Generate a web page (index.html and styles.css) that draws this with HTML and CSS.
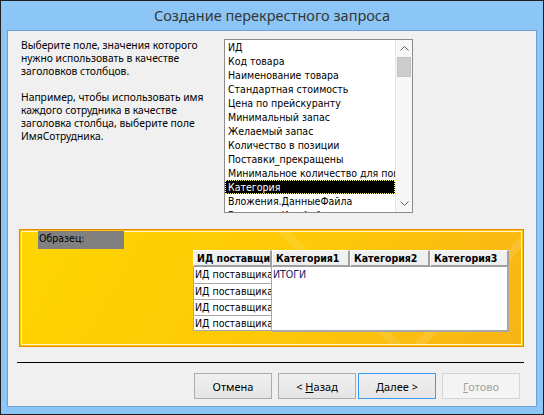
FILE: index.html
```html
<!DOCTYPE html>
<html lang="ru">
<head>
    <meta charset="UTF-8">
    <meta name="viewport" content="width=device-width, initial-scale=1.0">
    <title>Создание перекрестного запроса</title>
    <link rel="stylesheet" href="styles.css">
</head>
<body>

    <div class="window">
        <div class="titlebar">Создание перекрестного запроса</div>

        <div class="client">
            <div class="top">
                <div class="help">
                    <p>Выберите поле, значения которого нужно использовать в качестве заголовков столбцов.</p>
                    <p>Например, чтобы использовать имя каждого сотрудника в качестве заголовка столбца, выберите поле ИмяСотрудника.</p>
                </div>

                <div class="listbox">
                    <ul class="items">
                        <li>ИД</li>
                        <li>Код товара</li>
                        <li>Наименование товара</li>
                        <li>Стандартная стоимость</li>
                        <li>Цена по прейскуранту</li>
                        <li>Минимальный запас</li>
                        <li>Желаемый запас</li>
                        <li>Количество в позиции</li>
                        <li>Поставки_прекращены</li>
                        <li>Минимальное количество для повторного заказа</li>
                        <li class="selected"><span>Категория</span></li>
                        <li>Вложения.ДанныеФайла</li>
                        <li>Вложения.ИмяФайла</li>
                    </ul>
                    <div class="scrollbar">
                        <div class="arrow">
                            <svg width="9" height="5" viewBox="0 0 9 5"><polyline points="0.5,4.5 4.5,0.5 8.5,4.5" fill="none" stroke="#606060" stroke-width="1"/></svg>
                        </div>
                        <div class="thumb"></div>
                        <div class="track"></div>
                        <div class="arrow">
                            <svg width="9" height="5" viewBox="0 0 9 5"><polyline points="0.5,0.5 4.5,4.5 8.5,0.5" fill="none" stroke="#606060" stroke-width="1"/></svg>
                        </div>
                    </div>
                </div>
            </div>

            <div class="sample">
                <div class="sample-label">Образец:</div>
                <div class="grid">
                    <div class="grid-head">
                        <div class="hcell first">ИД поставщика</div>
                        <div class="hcell">Категория1</div>
                        <div class="hcell wide">Категория2</div>
                        <div class="hcell">Категория3</div>
                    </div>
                    <div class="grid-body">
                        <div class="rows">
                            <div class="rcell h17">ИД поставщика1</div>
                            <div class="rcell h16">ИД поставщика2</div>
                            <div class="rcell h16">ИД поставщика3</div>
                            <div class="rcell h15">ИД поставщика4</div>
                        </div>
                        <div class="values">ИТОГИ</div>
                    </div>
                </div>
            </div>

            <div class="separator"></div>

            <div class="buttons">
                <button class="btn">Отмена</button>
                <button class="btn gap-small">&lt; <u>Н</u>азад</button>
                <button class="btn default"><u>Д</u>алее &gt;</button>
                <button class="btn" disabled><u>Г</u>отово</button>
            </div>
        </div>
    </div>

</body>
</html>
```

FILE: styles.css
```css
body {
    margin: 0;
    background-color: #ffffff;
}

.window {
    width: 544px;
    height: 415px;
    box-sizing: border-box;
    border: 1px solid #1f1f1f;
    background-color: #8cc6f7;
    display: flex;
    flex-direction: column;
}

.titlebar {
    height: 29px;
    line-height: 29px;
    text-align: center;
    font-family: "Noto Sans", sans-serif;
    font-size: 14.5px;
    color: #363636;
}

.client {
    height: 377px;
    margin: 0 6px;
    box-sizing: border-box;
    border: 1px solid #6d9fd2;
    background-color: #f0f0f0;
    display: flex;
    flex-direction: column;
}

/* upper part: help text and field list */
.top {
    height: 198px;
    box-sizing: border-box;
    padding: 8px 0 0 13px;
    display: flex;
}

.help {
    width: 203px;
    font-family: "Noto Sans", sans-serif;
    font-size: 10.3px;
    line-height: 13px;
    color: #000;
}

.help p {
    margin: 0 0 13px;
}

.listbox {
    width: 189px;
    height: 174px;
    box-sizing: border-box;
    border: 1px solid #8c8c8c;
    background-color: #fff;
    display: flex;
    overflow: hidden;
}

.items {
    list-style: none;
    margin: 0;
    padding: 0;
    width: 170px;
    overflow: hidden;
    font-family: "DejaVu Sans Condensed", "Liberation Sans", sans-serif;
    font-size: 10.5px;
}

.items li {
    height: 14px;
    line-height: 14px;
    padding-left: 3px;
    white-space: nowrap;
    overflow: hidden;
    color: #000;
}

.items li.selected {
    padding-left: 0;
    background-color: #000;
    color: #fff;
}

.items li.selected span {
    display: block;
    height: 12px;
    line-height: 12px;
    padding-left: 2px;
    border: 1px dotted #ffff80;
}

.scrollbar {
    width: 17px;
    box-sizing: border-box;
    border-left: 1px solid #e6e6e6;
    background-color: #f7f7f7;
    display: flex;
    flex-direction: column;
}

.arrow {
    height: 17px;
    display: flex;
    align-items: center;
    justify-content: center;
}

.thumb {
    height: 18px;
    margin: 0 1px;
    background-color: #cdcdcd;
    border: 1px solid #c2c2c2;
}

.track {
    flex: 1;
}

/* sample preview */
.sample {
    width: 505px;
    height: 118px;
    margin-left: 11px;
    box-sizing: border-box;
    border: 1px solid #f0820a;
    box-shadow: inset 0 0 0 1px #ffc400, inset 0 0 0 2px #fff6c8;
    background-image:
        linear-gradient(135deg, rgba(255,255,255,0) 82%, rgba(255,255,255,0.12) 82%, rgba(255,255,255,0.12) 84%, rgba(255,255,255,0) 84%),
        linear-gradient(45deg, rgba(255,255,255,0) 60%, rgba(255,255,255,0.10) 60%, rgba(255,255,255,0.10) 62%, rgba(255,255,255,0) 62%),
        linear-gradient(120deg, #ffd600 0%, #fdc808 55%, #f8b416 100%);
    padding: 1px 0 0 18px;
}

.sample-label {
    width: 86px;
    height: 18px;
    line-height: 14px;
    background-color: #808080;
    font-family: "DejaVu Sans Condensed", "Liberation Sans", sans-serif;
    font-size: 10.5px;
    color: #000;
    padding-left: 1px;
    box-sizing: border-box;
}

.grid {
    width: 316px;
    margin: 1px 0 0 155px;
    font-family: "DejaVu Sans Condensed", "Liberation Sans", sans-serif;
    font-size: 10.5px;
}

.grid-head {
    display: flex;
    height: 17px;
}

.hcell {
    width: 78px;
    box-sizing: border-box;
    background-color: #f0f0f0;
    border-top: 1px solid #fff;
    border-left: 1px solid #fff;
    border-right: 2px solid #a0a0a0;
    border-bottom: 2px solid #a0a0a0;
    font-weight: bold;
    line-height: 14px;
    padding-left: 3px;
    white-space: nowrap;
    overflow: hidden;
}

.hcell.first {
    width: 79px;
}

.hcell.wide {
    width: 80px;
}

.hcell:last-child {
    width: 79px;
}

.grid-body {
    display: flex;
}

.rows {
    width: 79px;
    display: flex;
    flex-direction: column;
}

.rcell {
    box-sizing: border-box;
    background-color: #fff;
    border: 1px solid #a8a8a8;
    border-top: none;
    padding-left: 1px;
    white-space: nowrap;
    overflow: hidden;
}

.rcell.h17 { height: 17px; line-height: 15px; }
.rcell.h16 { height: 16px; line-height: 15px; }
.rcell.h15 { height: 15px; line-height: 14px; }

.values {
    width: 237px;
    height: 65px;
    box-sizing: border-box;
    background-color: #fff;
    border-right: 2px solid #a8a8a8;
    border-bottom: 2px solid #a8a8a8;
    color: #14205a;
    line-height: 15px;
    padding-left: 1px;
}

.separator {
    height: 1px;
    width: 507px;
    margin: 15px 0 0 9px;
    background-color: #000;
}

.buttons {
    display: flex;
    justify-content: flex-end;
    gap: 6px;
    margin-top: 10px;
    padding-right: 16px;
}

.btn {
    width: 78px;
    height: 26px;
    box-sizing: border-box;
    border: 1px solid #acacac;
    background: linear-gradient(#f0f0f0, #e5e5e5);
    font-family: "Noto Sans", sans-serif;
    font-size: 11px;
    color: #000;
    padding: 0;
}

.btn.gap-small {
    margin-right: -4px;
}

.btn.default {
    border-color: #3c9af2;
}

.btn:disabled {
    border-color: #d5d5d5;
    background: #f4f4f4;
    color: #a3a3a3;
}
```
